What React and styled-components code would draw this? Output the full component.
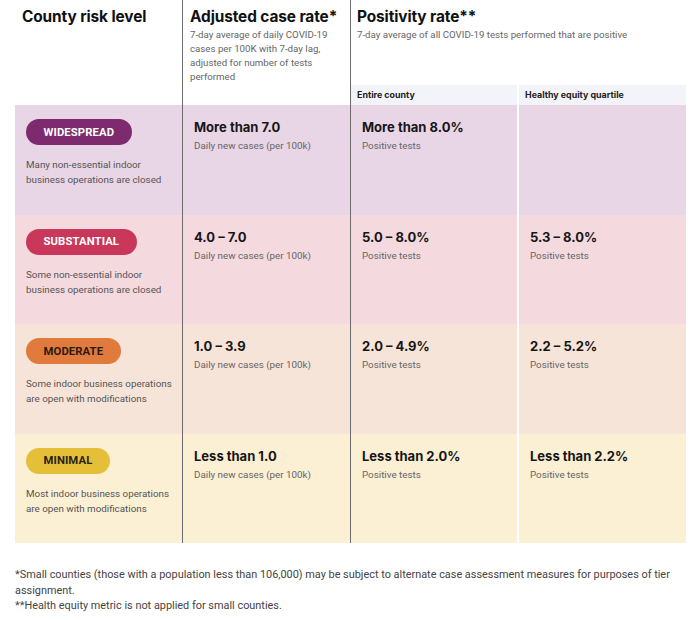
import styled, { createGlobalStyle } from "styled-components";

const GlobalStyle = createGlobalStyle`
  html, body {
    margin: 0;
    padding: 0;
    background: #fff;
  }
  body {
    font-family: Roboto, "Liberation Sans", Arial, sans-serif;
    color: #222;
  }
`;

const TIERS = [
  {
    name: "WIDESPREAD",
    badge: "#7d2b6e",
    ink: "#fff",
    bg: "#e8d5e6",
    desc: ["Many non-essential indoor", "business operations are closed"],
    cases: "More than 7.0",
    county: "More than 8.0%",
    equity: null,
  },
  {
    name: "SUBSTANTIAL",
    badge: "#c9385b",
    ink: "#fff",
    bg: "#f4d9df",
    desc: ["Some non-essential indoor", "business operations are closed"],
    cases: "4.0 – 7.0",
    county: "5.0 – 8.0%",
    equity: "5.3 – 8.0%",
  },
  {
    name: "MODERATE",
    badge: "#e17a3d",
    ink: "#2a1a10",
    bg: "#f7e4d9",
    desc: ["Some indoor business operations", "are open with modifications"],
    cases: "1.0 – 3.9",
    county: "2.0 – 4.9%",
    equity: "2.2 – 5.2%",
  },
  {
    name: "MINIMAL",
    badge: "#e6bf38",
    ink: "#2a2210",
    bg: "#fbefd4",
    desc: ["Most indoor business operations", "are open with modifications"],
    cases: "Less than 1.0",
    county: "Less than 2.0%",
    equity: "Less than 2.2%",
  },
];

export default function App() {
  return (
    <>
      <GlobalStyle />
      <Page>
        <Table>
          <HeadCell $line>
            <HeadTitle>County risk level</HeadTitle>
          </HeadCell>
          <HeadCell $line>
            <HeadTitle>Adjusted case rate*</HeadTitle>
            <HeadNote>
              7-day average of daily COVID-19 cases per 100K with 7-day lag,
              adjusted for number of tests performed
            </HeadNote>
          </HeadCell>
          <WideHead>
            <HeadTitle>Positivity rate**</HeadTitle>
            <HeadNote>
              7-day average of all COVID-19 tests performed that are positive
            </HeadNote>
          </WideHead>
          <SubHead $gap>Entire county</SubHead>
          <SubHead>Healthy equity quartile</SubHead>

          {TIERS.map((t) => (
            <Row key={t.name} $bg={t.bg}>
              <TierCell $line>
                <Badge $color={t.badge} $ink={t.ink}>
                  {t.name}
                </Badge>
                <Desc>
                  {t.desc[0]}
                  <br />
                  {t.desc[1]}
                </Desc>
              </TierCell>
              <ValueCell $line>
                <Value>{t.cases}</Value>
                <Label>Daily new cases (per 100k)</Label>
              </ValueCell>
              <ValueCell $gap>
                <Value>{t.county}</Value>
                <Label>Positive tests</Label>
              </ValueCell>
              <ValueCell>
                {t.equity && (
                  <>
                    <Value>{t.equity}</Value>
                    <Label>Positive tests</Label>
                  </>
                )}
              </ValueCell>
            </Row>
          ))}
        </Table>

        <Footnotes>
          <p>
            *Small counties (those with a population less than 106,000) may be
            subject to alternate case assessment measures for purposes of tier
            assignment.
          </p>
          <p>**Health equity metric is not applied for small counties.</p>
        </Footnotes>
      </Page>
    </>
  );
}

const Page = styled.div`
  width: 698px;
  padding: 0 0 0 15px;
  box-sizing: border-box;
`;

const Table = styled.div`
  display: grid;
  width: 671px;
  grid-template-columns: 168px 168px 168px 167px;
  grid-template-rows: 85px 20px repeat(4, 109.5px);
`;

const cellLine = (p) =>
  p.$line
    ? "border-right: 1px solid #6b6b6b;"
    : p.$gap
    ? "border-right: 2px solid #fff;"
    : "";

const HeadCell = styled.div`
  grid-row: span 2;
  padding: 7px 6px 0 7px;
  box-sizing: border-box;
  ${cellLine}
`;

const WideHead = styled.div`
  grid-column: span 2;
  padding: 7px 8px 0 6px;
`;

const HeadTitle = styled.div`
  font-family: Inter, "Noto Sans", sans-serif;
  font-weight: 700;
  font-size: 15.4px;
  line-height: 20px;
  letter-spacing: -0.1px;
  color: #111;
`;

const HeadNote = styled.div`
  font-size: 9.7px;
  line-height: 14px;
  color: #666;
  margin-top: 1px;
  padding-right: 4px;
`;

const SubHead = styled.div`
  background: #f3f4f9;
  font-family: Inter, "Noto Sans", sans-serif;
  font-weight: 700;
  font-size: 8.9px;
  line-height: 20px;
  color: #222;
  padding-left: 6px;
  ${cellLine}
`;

const Row = styled.div`
  display: contents;

  & > div {
    background: ${(p) => p.$bg};
  }
`;

const TierCell = styled.div`
  padding: 14px 6px 0 11px;
  box-sizing: border-box;
  ${cellLine}
`;

const Badge = styled.div`
  display: inline-flex;
  align-items: center;
  justify-content: center;
  height: 26px;
  padding: 0 17.5px;
  border-radius: 13px;
  background: ${(p) => p.$color};
  color: ${(p) => p.$ink};
  font-weight: 700;
  font-size: 11.3px;
  letter-spacing: 0.1px;
`;

const Desc = styled.div`
  margin-top: 12px;
  font-size: 9.8px;
  line-height: 15px;
  color: #555;
`;

const ValueCell = styled.div`
  padding: 13px 6px 0 11px;
  box-sizing: border-box;
  ${cellLine}
`;

const Value = styled.div`
  font-family: Inter, "Noto Sans", sans-serif;
  font-weight: 700;
  font-size: 13px;
  line-height: 18px;
  color: #161616;
`;

const Label = styled.div`
  font-size: 9.8px;
  line-height: 14px;
  margin-top: 3px;
  color: #666;
`;

const Footnotes = styled.div`
  margin-top: 24px;
  font-size: 10.9px;
  line-height: 15.5px;
  color: #444;

  p {
    margin: 0;
  }
`;
